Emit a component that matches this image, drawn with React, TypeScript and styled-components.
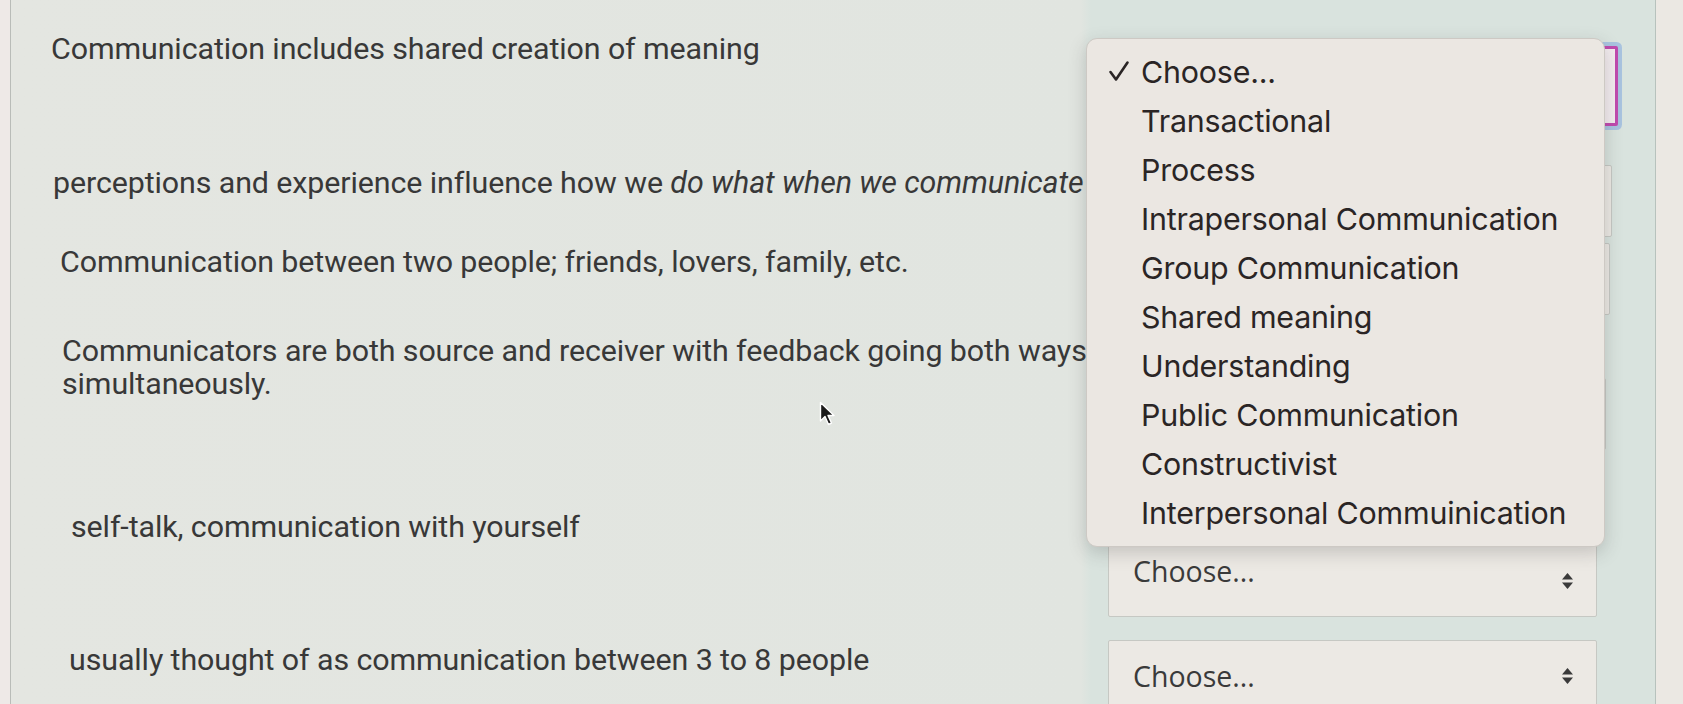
import React from "react";
import styled, { createGlobalStyle } from "styled-components";

const GlobalStyle = createGlobalStyle`
  html, body {
    margin: 0;
    padding: 0;
    background: #e3e6e1;
  }
  body {
    font-family: Roboto, "Liberation Sans", sans-serif;
  }
`;

type Row = {
  text: React.ReactNode;
  height: number;
  textTop: number;
  indent: number;
  selectTop: number;
  selectWidth: number;
  labelLift: number;
  focused?: boolean;
  covered?: boolean;
};

const rows: Row[] = [
  {
    text: "Communication includes shared creation of meaning",
    height: 130,
    textTop: 2,
    indent: 40,
    selectTop: 16,
    selectWidth: 510,
    labelLift: 12,
    focused: true,
    covered: true,
  },
  {
    text: (
      <>
        perceptions and experience influence how we <em>do what when we communicate</em>
      </>
    ),
    height: 80,
    textTop: 6,
    indent: 42,
    selectTop: 5,
    selectWidth: 504,
    labelLift: 12,
    covered: true,
  },
  {
    text: "Communication between two people; friends, lovers, family, etc.",
    height: 90,
    textTop: 5,
    indent: 49,
    selectTop: 3,
    selectWidth: 502,
    labelLift: 12,
    covered: true,
  },
  {
    text: (
      <>
        Communicators are both source and receiver with feedback going both ways
        <br />
        simultaneously.
      </>
    ),
    height: 175,
    textTop: 4,
    indent: 51,
    selectTop: 48,
    selectWidth: 498,
    labelLift: 12,
    covered: true,
  },
  {
    text: "self-talk, communication with yourself",
    height: 125,
    textTop: 5,
    indent: 60,
    selectTop: 40,
    selectWidth: 489,
    labelLift: 20,
  },
  {
    text: "usually thought of as communication between 3 to 8 people",
    height: 120,
    textTop: 13,
    indent: 58,
    selectTop: 10,
    selectWidth: 489,
    labelLift: 0,
  },
];

const options = [
  "Choose...",
  "Transactional",
  "Process",
  "Intrapersonal Communication",
  "Group Communication",
  "Shared meaning",
  "Understanding",
  "Public Communication",
  "Constructivist",
  "Interpersonal Commuinication",
];

const Screen = styled.div`
  position: relative;
  display: flex;
  width: 1683px;
  height: 704px;
  overflow: hidden;
`;

const Bezel = styled.div`
  width: 10px;
  flex-shrink: 0;
  background: #eee9e7;
  border-right: 1px solid #b9bcb8;
`;

const Form = styled.div`
  flex: 1;
  padding-top: 30px;
  background: linear-gradient(
    to right,
    #e4e6e1 0,
    #e1e5e0 1070px,
    #d9e3de 1080px,
    #d9e3de 100%
  );
`;

const RowLine = styled.div<{ $height: number }>`
  display: grid;
  grid-template-columns: 1080px 1fr;
  height: ${(p) => p.$height}px;
`;

const Question = styled.div<{ $top: number; $indent: number }>`
  padding-top: ${(p) => p.$top}px;
  padding-left: ${(p) => p.$indent}px;
  font-size: 30.4px;
  line-height: 33px;
  color: #383838;
  white-space: nowrap;
  letter-spacing: -0.1px;

  em {
    font-style: italic;
  }
`;

const Answer = styled.div<{ $top: number }>`
  padding-top: ${(p) => p.$top}px;
  padding-left: 17px;
`;

const Select = styled.div<{ $focused?: boolean; $width: number }>`
  box-sizing: border-box;
  width: ${(p) => p.$width}px;
  height: ${(p) => (p.$focused ? 80 : 72)}px;
  display: flex;
  align-items: center;
  justify-content: space-between;
  padding: 0 22px 0 24px;
  background: ${(p) => (p.$focused ? "#f3ecef" : "#ece9e4")};
  border: ${(p) => (p.$focused ? "3px solid #c04aae" : "1px solid #c6c8c3")};
  box-shadow: ${(p) => (p.$focused ? "0 0 0 4px #a9c3df" : "none")};
  border-radius: 2px;
  font-family: "Open Sans", "DejaVu Sans", sans-serif;
  font-size: 28.5px;
  color: #3a3a3a;
`;

const SelectLabel = styled.span<{ $hidden?: boolean; $lift: number }>`
  padding-bottom: ${(p) => p.$lift}px;
  visibility: ${(p) => (p.$hidden ? "hidden" : "visible")};
`;

const Arrows = styled.svg`
  width: 13px;
  height: 20px;
`;

const RightEdge = styled.div`
  width: 27px;
  flex-shrink: 0;
  background: #ebe8e3;
  border-left: 1px solid #b7c2bd;
`;

const Menu = styled.div`
  position: absolute;
  left: 1086px;
  top: 38px;
  width: 519px;
  box-sizing: border-box;
  padding: 8px 0 9px;
  background: #ebe7e2;
  border: 1px solid #cdc9c4;
  border-radius: 11px;
  box-shadow: 0 6px 18px rgba(60, 60, 60, 0.22);
  font-family: Inter, "Noto Sans", sans-serif;
`;

const MenuItem = styled.div`
  position: relative;
  height: 49px;
  display: flex;
  align-items: center;
  padding-left: 54px;
  font-size: 30.4px;
  color: #2a2525;
  letter-spacing: -0.2px;
`;

const Check = styled.svg`
  position: absolute;
  left: 21px;
  top: 13px;
  width: 22px;
  height: 22px;
`;

const Cursor = styled.svg`
  position: absolute;
  left: 819px;
  top: 401px;
  width: 17px;
  height: 26px;
`;

function UpDown() {
  return (
    <Arrows viewBox="0 0 13 20">
      <path d="M6.5 2 L12 8.5 H1 Z" fill="#3a3a3a" />
      <path d="M6.5 18 L12 11.5 H1 Z" fill="#3a3a3a" />
    </Arrows>
  );
}

export default function App() {
  return (
    <>
      <GlobalStyle />
      <Screen>
        <Bezel />
        <Form>
          {rows.map((row, i) => (
            <RowLine key={i} $height={row.height}>
              <Question $top={row.textTop} $indent={row.indent}>
                {row.text}
              </Question>
              <Answer $top={row.selectTop}>
                <Select $focused={row.focused} $width={row.selectWidth}>
                  <SelectLabel $hidden={row.covered} $lift={row.labelLift}>
                    Choose...
                  </SelectLabel>
                  <UpDown />
                </Select>
              </Answer>
            </RowLine>
          ))}
        </Form>
        <RightEdge />

        <Menu>
          {options.map((opt, i) => (
            <MenuItem key={opt}>
              {i === 0 && (
                <Check viewBox="0 0 22 22">
                  <path
                    d="M2.5 12 L8 19.5 L19.5 2.5"
                    fill="none"
                    stroke="#2a2525"
                    strokeWidth="2.6"
                    strokeLinecap="round"
                    strokeLinejoin="round"
                  />
                </Check>
              )}
              {opt}
            </MenuItem>
          ))}
        </Menu>

        <Cursor viewBox="0 0 17 26">
          <path
            d="M1.5 1.5 L1.5 20 L6 15.5 L9.5 23.5 L12.5 22 L9 14.5 L15 14.5 Z"
            fill="#1b1b1b"
            stroke="#ffffff"
            strokeWidth="1.4"
            strokeLinejoin="round"
          />
        </Cursor>
      </Screen>
    </>
  );
}
